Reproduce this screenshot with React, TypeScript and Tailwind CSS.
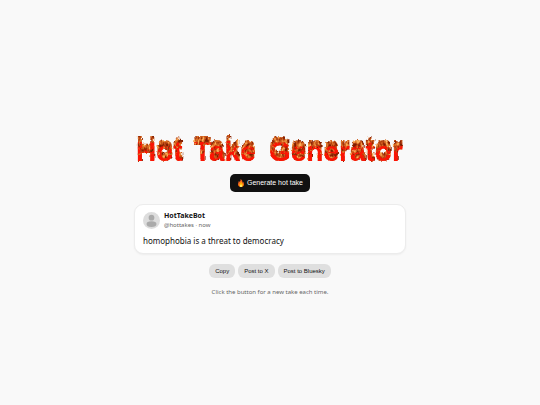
import { useState } from 'react';

const takes = ['homophobia is a threat to democracy'];

function FlameTitle() {
  return (
    <h1 className="w-full">
      <svg viewBox="0 0 272 36" className="block w-full">
        <defs>
          <filter
            id="fire"
            filterUnits="userSpaceOnUse"
            x="0"
            y="0"
            width="272"
            height="36"
            colorInterpolationFilters="sRGB"
          >
            {/* flames: letters stretched upwards with a ragged edge */}
            <feMorphology in="SourceAlpha" operator="dilate" radius="0 3" result="tall" />
            <feOffset in="tall" dx="0" dy="-3" result="raised" />
            <feTurbulence type="fractalNoise" baseFrequency="0.35 0.22" numOctaves="2" seed="7" result="noise" />
            <feDisplacementMap in="raised" in2="noise" scale="4" xChannelSelector="R" yChannelSelector="G" result="shape" />
            <feColorMatrix
              in="noise"
              type="matrix"
              values="2.4 0 0 0 -0.7  2.4 0 0 0 -0.7  2.4 0 0 0 -0.7  0 0 0 0 1"
              result="grey"
            />
            <feComponentTransfer in="grey" result="embers">
              <feFuncR type="table" tableValues="0.5 0.64 0.78 0.88 0.98" />
              <feFuncG type="table" tableValues="0.12 0.21 0.33 0.48 0.68" />
              <feFuncB type="table" tableValues="0 0.05 0.1 0.18 0.35" />
            </feComponentTransfer>
            <feComposite in="embers" in2="shape" operator="in" result="flames" />

            {/* solid red lettering */}
            <feFlood floodColor="#fb1404" result="red" />
            <feComposite in="red" in2="SourceAlpha" operator="in" result="letters" />

            {/* flecks burning through the upper part of the letters */}
            <feTurbulence
              type="fractalNoise"
              baseFrequency="0.3"
              numOctaves="2"
              seed="12"
              x="0"
              y="0"
              width="272"
              height="25"
              result="patches"
            />
            <feColorMatrix
              in="patches"
              type="matrix"
              values="0 0 0 0 0  0 0 0 0 0  0 0 0 0 0  0 0 7 0 -3.3"
              result="holes"
            />
            <feComposite in="embers" in2="holes" operator="in" result="burning" />
            <feComposite in="burning" in2="SourceAlpha" operator="in" result="flecks" />
            <feMerge>
              <feMergeNode in="flames" />
              <feMergeNode in="letters" />
              <feMergeNode in="flecks" />
            </feMerge>
          </filter>
        </defs>
        <text
          y="31"
          fontFamily="'Liberation Sans', sans-serif"
          fontSize="28"
          fontWeight="700"
          filter="url(#fire)"
        >
          <tspan x="2">Hot</tspan> <tspan x="60">Take</tspan> <tspan x="135">Generator</tspan>
        </text>
      </svg>
    </h1>
  );
}

function FireIcon() {
  return (
    <svg viewBox="0 0 16 16" className="size-2" aria-hidden="true">
      <path d="M7 0c1 3-1 4-2 6-.4-1-.8-1.600-1.500-2C3.500 6.500 2 8 2 11c0 3 2.500 5 6 5s6-2 6-5.500c0-2-1-3.500-1.500-5-.5.8-.8 1.500-1.500 2C11 4 10 1.500 7 0z" fill="#f4611e" />
      <path d="M8 5c.5 2-3.500 4-3.500 7 0 2.500 1.500 4 3.500 4s4-1.500 4-4c0-1.500-.5-2.500-1-3.500-.3 1-.7 1.500-1.200 1.800C10 8 9.500 6 8 5z" fill="#ffb300" />
      <path d="M8 10c0 1.500-2 2-2 4 0 1.300 1 2 2 2s2-.7 2-2c0-1.500-1.500-2.500-2-4z" fill="#fff176" />
    </svg>
  );
}

function Avatar() {
  return (
    <svg viewBox="0 0 48 48" className="size-[17px] shrink-0" aria-hidden="true">
      <circle cx="24" cy="24" r="24" fill="#dddddd" />
      <circle cx="24" cy="16" r="8" fill="#aaaaaa" />
      <ellipse cx="24" cy="34" rx="14" ry="8" fill="#aaaaaa" />
    </svg>
  );
}

export default function App() {
  const [index, setIndex] = useState(0);
  const take = takes[index];

  const nextTake = () => setIndex((index + 1) % takes.length);
  const copyTake = () => navigator.clipboard.writeText(take);

  const shareButton =
    "h-[14px] rounded-md bg-[#dfdfdf] px-1.5 font-['Liberation_Sans',sans-serif] text-[6px] leading-[14px] font-medium text-[#111]";

  return (
    <main className="flex min-h-screen flex-col items-center justify-center bg-[#f9f9f9] px-4 pt-[22px] font-['Noto_Sans',sans-serif] text-[#111]">
      <div className="flex w-full max-w-[272px] flex-col items-center">
        <FlameTitle />
        <button
          onClick={nextTake}
          className="mt-2 flex h-[18px] items-center gap-0.5 rounded-[5px] bg-[#111] px-[7px] font-['Liberation_Sans',sans-serif] text-[7px] text-white"
        >
          <FireIcon />
          Generate hot take
        </button>
        <article className="mt-3 w-full rounded-[9px] border border-[#ececec] bg-white px-2 py-1.5 shadow-xs">
          <header className="flex items-center gap-1">
            <Avatar />
            <div>
              <p className="text-[7px] leading-[9px] font-bold">HotTakeBot</p>
              <p className="text-[6px] leading-[10px] text-[#666]">@hottakes · now</p>
            </div>
          </header>
          <p className="mt-[5px] text-[8px] leading-[12px]">{take}</p>
        </article>
        <div className="mt-2.5 flex gap-[3px]">
          <button onClick={copyTake} className={shareButton}>Copy</button>
          <button className={shareButton}>Post to X</button>
          <button className={shareButton}>Post to Bluesky</button>
        </div>
        <p className="mt-2.5 text-[6px] leading-[9px] text-[#666]">Click the button for a new take each time.</p>
      </div>
    </main>
  );
}
